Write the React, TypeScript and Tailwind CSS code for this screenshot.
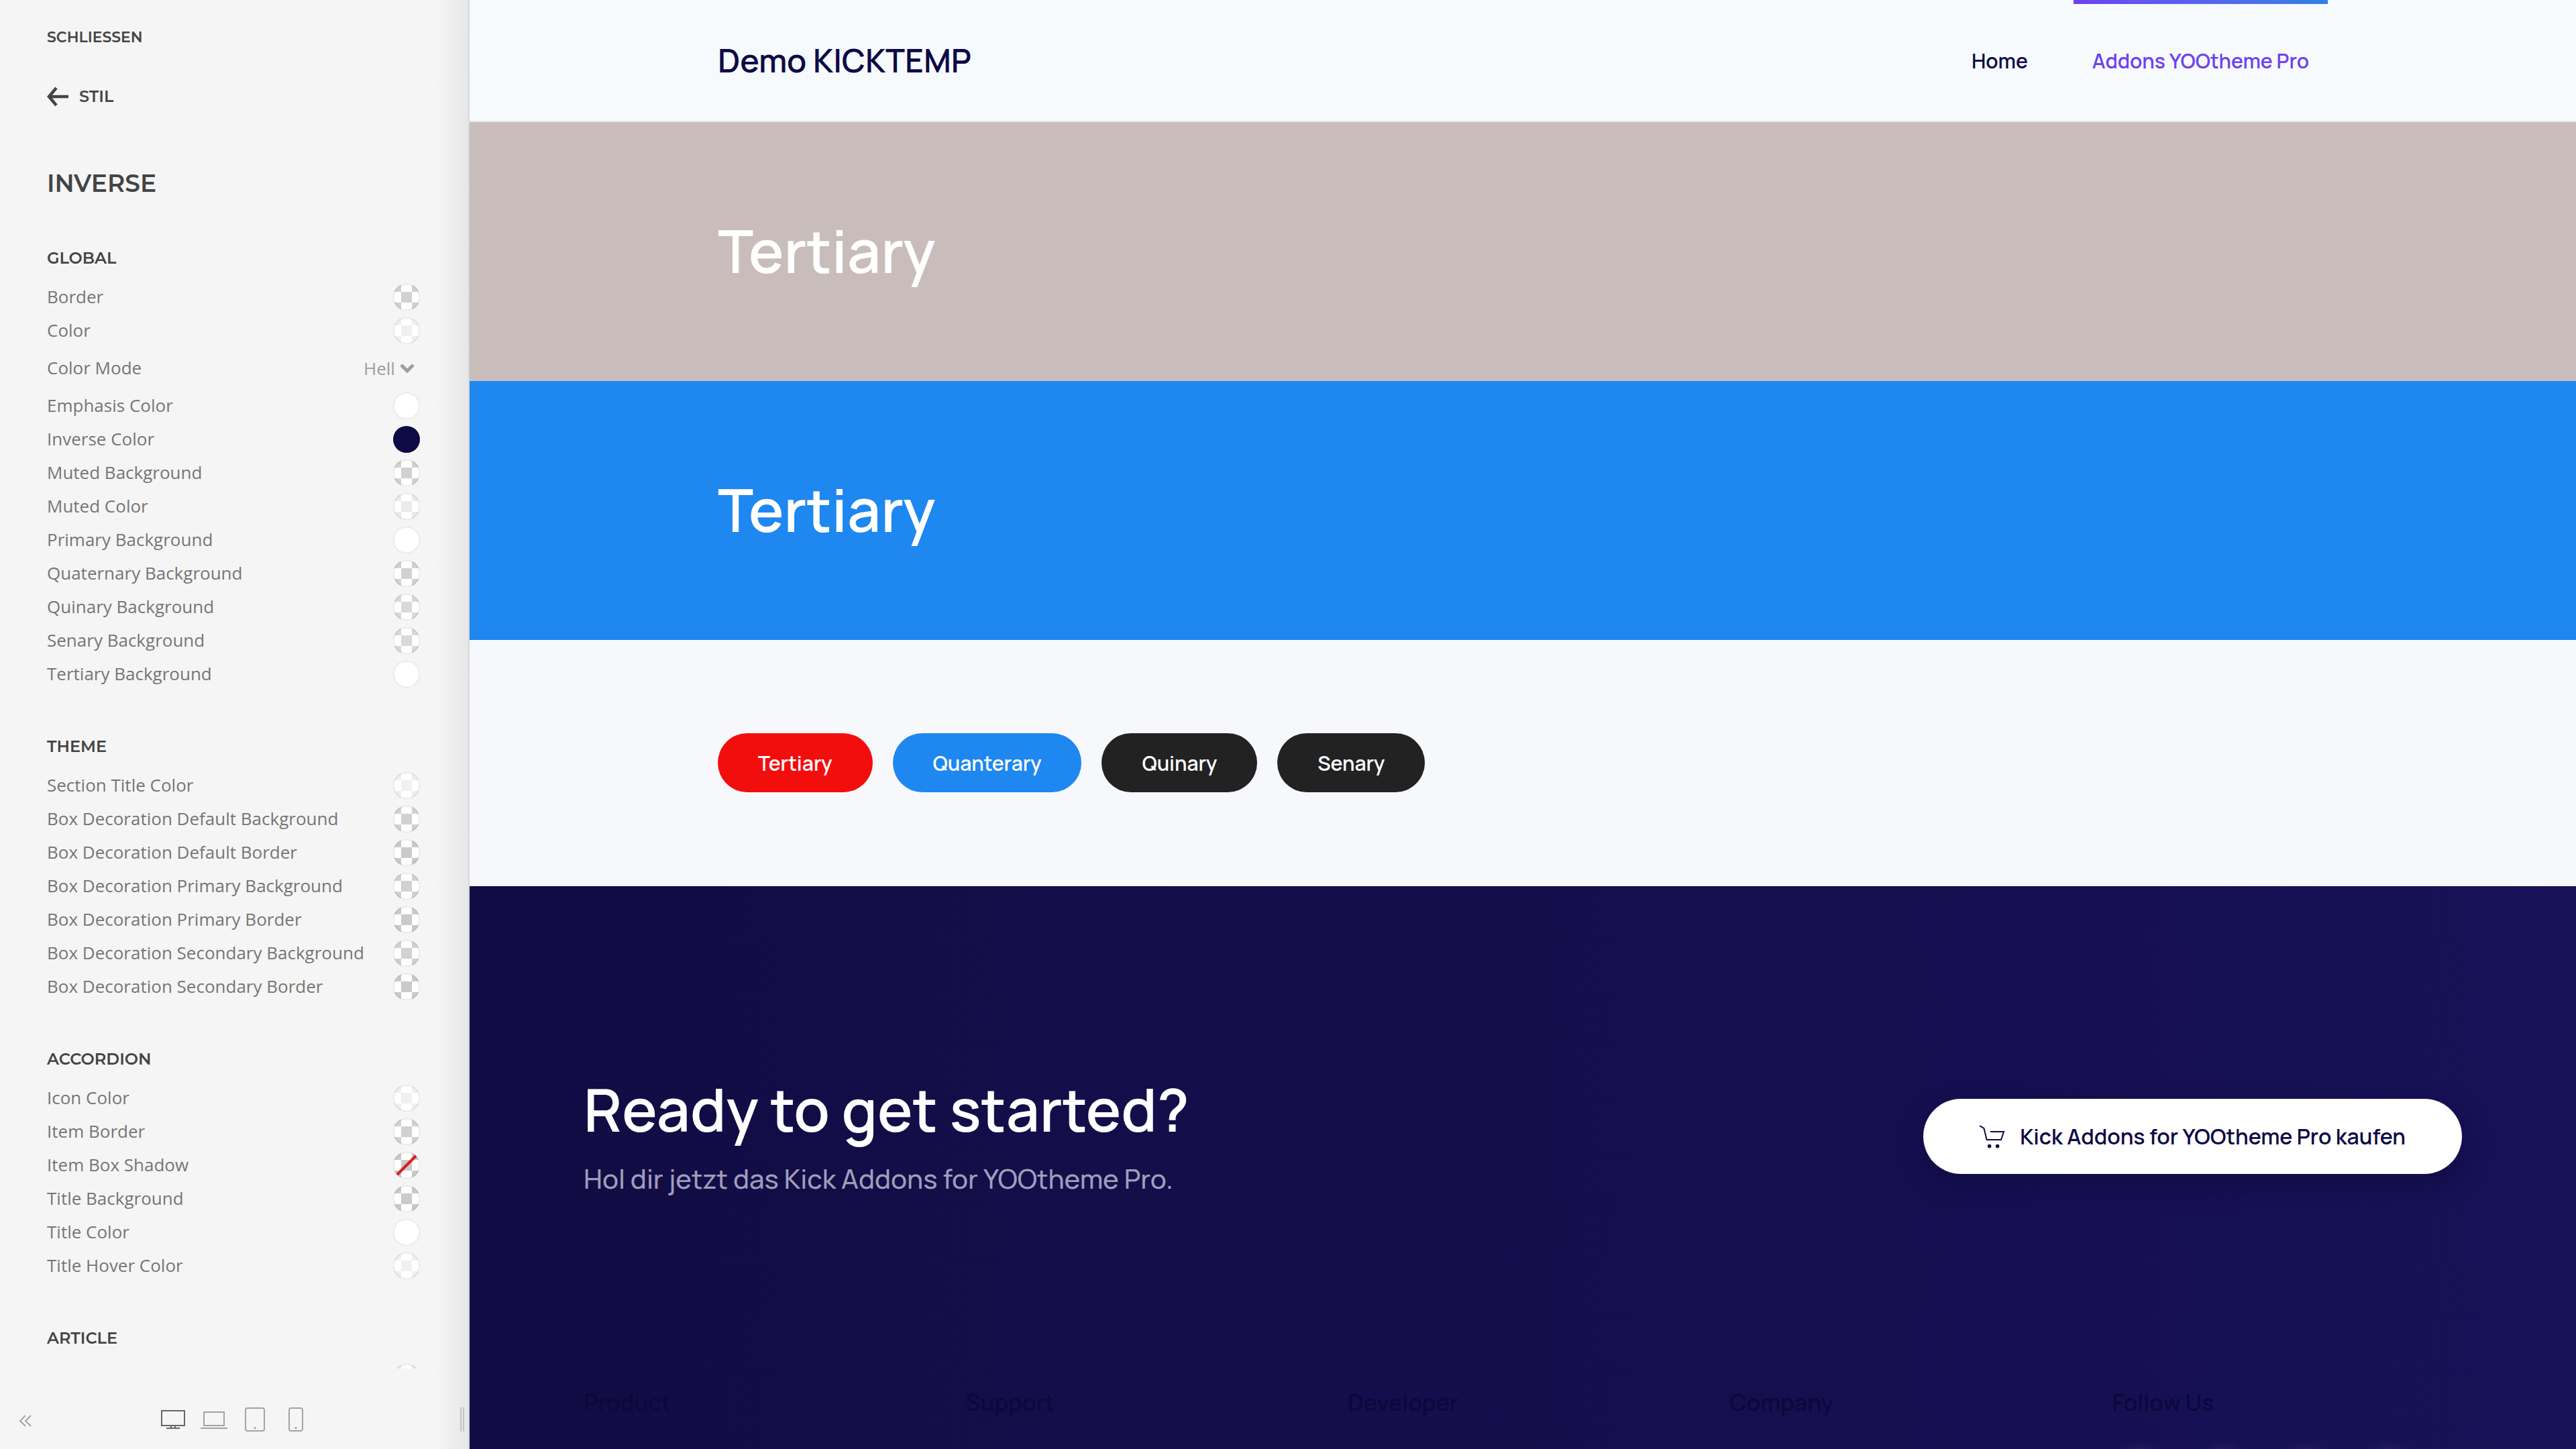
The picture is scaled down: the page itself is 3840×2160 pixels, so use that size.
import type { ReactNode } from "react";

type Tone = "white" | "navy" | "faint" | "light" | "soft" | "mid" | "dark" | "none";

type Option = { label: string; tone?: Tone; select?: boolean; swatchOnly?: boolean };
type Group = { title: string; options: Option[] };

const groups: Group[] = [
  {
    title: "GLOBAL",
    options: [
      { label: "Border", tone: "mid" },
      { label: "Color", tone: "faint" },
      { label: "Color Mode", select: true },
      { label: "Emphasis Color", tone: "white" },
      { label: "Inverse Color", tone: "navy" },
      { label: "Muted Background", tone: "mid" },
      { label: "Muted Color", tone: "light" },
      { label: "Primary Background", tone: "white" },
      { label: "Quaternary Background", tone: "mid" },
      { label: "Quinary Background", tone: "soft" },
      { label: "Senary Background", tone: "soft" },
      { label: "Tertiary Background", tone: "white" },
    ],
  },
  {
    title: "THEME",
    options: [
      { label: "Section Title Color", tone: "faint" },
      { label: "Box Decoration Default Background", tone: "mid" },
      { label: "Box Decoration Default Border", tone: "dark" },
      { label: "Box Decoration Primary Background", tone: "mid" },
      { label: "Box Decoration Primary Border", tone: "dark" },
      { label: "Box Decoration Secondary Background", tone: "mid" },
      { label: "Box Decoration Secondary Border", tone: "dark" },
    ],
  },
  {
    title: "ACCORDION",
    options: [
      { label: "Icon Color", tone: "faint" },
      { label: "Item Border", tone: "mid" },
      { label: "Item Box Shadow", tone: "none" },
      { label: "Title Background", tone: "dark" },
      { label: "Title Color", tone: "white" },
      { label: "Title Hover Color", tone: "faint" },
    ],
  },
  { title: "ARTICLE", options: [{ label: "Meta Color", tone: "light", swatchOnly: true }] },
];

const checker: Record<Tone, string> = {
  white: "#ffffff",
  navy: "#0e0a45",
  faint: "#f0f0f0",
  light: "#ebebeb",
  soft: "#d9d9d9",
  mid: "#d1d1d1",
  dark: "#cacaca",
  none: "#cacaca",
};

function Swatch({ tone, label }: { tone: Tone; label: string }) {
  const solid = tone === "white" || tone === "navy";
  return (
    <button
      type="button"
      aria-label={label}
      className="relative size-10 shrink-0 rounded-full shadow-[inset_0_0_3px_rgba(0,0,0,0.25)]"
      style={
        solid
          ? { backgroundColor: checker[tone] }
          : {
              background: `repeating-conic-gradient(#ffffff 0 25%, ${checker[tone]} 0 50%) -4px -4px / 32px 32px`,
            }
      }
    >
      {tone === "none" && (
        <svg viewBox="0 0 40 40" className="absolute inset-0 size-10">
          <path d="M6 34 34 6" stroke="#dc1c1c" strokeWidth="4" />
        </svg>
      )}
    </button>
  );
}

function OptionRow({ option }: { option: Option }) {
  if (option.select) {
    return (
      <div className="flex h-[52px] items-center justify-between pr-2">
        <label htmlFor="color-mode" className="pb-0.5">
          {option.label}
        </label>
        <span className="flex items-center gap-2 text-[#9e9e9e]">
          <select id="color-mode" className="w-[46px] appearance-none bg-transparent" defaultValue="Hell">
            <option>Hell</option>
            <option>Dunkel</option>
          </select>
          <svg viewBox="0 0 22 14" className="h-3.5 w-[22px]" fill="none">
            <path d="m2 2 9 9 9-9" stroke="#9e9e9e" strokeWidth="5" />
          </svg>
        </span>
      </div>
    );
  }
  return (
    <div className={`flex h-10 items-center ${option.swatchOnly ? "justify-end" : "justify-between"}`}>
      {!option.swatchOnly && <span className="pb-0.5">{option.label}</span>}
      <Swatch tone={option.tone ?? "white"} label={option.label} />
    </div>
  );
}

function DeviceButton({ label, active, children }: { label: string; active?: boolean; children: ReactNode }) {
  return (
    <button type="button" aria-label={label} className={active ? "text-[#666666]" : "text-[#a3a3a3]"}>
      <svg viewBox="0 0 20 20" className="size-10" fill="none" stroke="currentColor">
        {children}
      </svg>
    </button>
  );
}

function Sidebar() {
  return (
    <aside className="relative flex h-full w-[700px] shrink-0 flex-col border-r-2 border-[#d6d8d9] bg-[#f5f5f5] font-['Open_Sans','Noto_Sans',sans-serif] text-[26px] leading-10 text-[#757575]">
      <div className="flex min-h-0 flex-1 flex-col overflow-hidden pt-9 pr-[72px] pl-[70px]">
        <div className="font-['Montserrat','Inter',sans-serif] font-semibold text-[#444444]">
          <button type="button" className="block text-[22px] leading-10">
            SCHLIESSEN
          </button>
          <button type="button" className="mt-12 flex items-center gap-4 text-[24px] leading-10">
            <svg viewBox="0 0 32 30" className="h-[30px] w-8" fill="none" stroke="currentColor" strokeWidth="4.5">
              <path d="M32 15H3M14 2 3 15l11 13" />
            </svg>
            STIL
          </button>
          <h1 className="mt-[87px] text-[36px] leading-[44px]">INVERSE</h1>
        </div>
        {groups.map((group, i) => (
          <section key={group.title} className={i === 0 ? "mt-[70px]" : "mt-[68px]"}>
            <h2 className="mb-[18px] font-['Montserrat','Inter',sans-serif] text-[24px] leading-10 font-semibold text-[#444444]">
              {group.title}
            </h2>
            <div className="flex flex-col gap-2.5">
              {group.options.map((option) => (
                <OptionRow key={option.label} option={option} />
              ))}
            </div>
          </section>
        ))}
      </div>
      <footer className="grid h-[120px] shrink-0 grid-cols-[1fr_auto_1fr] items-center pt-8">
        <button type="button" aria-label="Einklappen" className="ml-[18px] justify-self-start text-[#a3a3a3]">
          <svg viewBox="0 0 20 20" className="size-10" fill="none" stroke="currentColor">
            <path d="m10 15-4-4 4-4M14 15l-4-4 4-4" />
          </svg>
        </button>
        <div className="flex gap-[21px]">
          <DeviceButton label="Desktop" active>
            <path d="M1.5 3.5h17v11h-17zM8.5 15v2M11.5 15v2M5 16.5h10" />
          </DeviceButton>
          <DeviceButton label="Laptop">
            <path d="M2.5 4.5h15v10h-15zM0 16.5h20" />
          </DeviceButton>
          <DeviceButton label="Tablet">
            <rect x="3" y="1.5" width="14" height="17" rx="1.5" />
            <circle cx="10" cy="16.3" r="0.8" fill="currentColor" stroke="none" />
          </DeviceButton>
          <DeviceButton label="Smartphone">
            <rect x="5" y="1.5" width="10" height="17" rx="1.5" />
            <circle cx="10" cy="16.3" r="0.8" fill="currentColor" stroke="none" />
          </DeviceButton>
        </div>
        <div className="mr-1.5 h-9 w-1.5 justify-self-end border-x-2 border-[#cccccc]" />
      </footer>
      <div className="pointer-events-none absolute inset-y-0 right-0 w-12 bg-linear-to-l from-black/6 to-transparent" />
    </aside>
  );
}

const pills = [
  { label: "Tertiary", className: "bg-[#f30e0e]" },
  { label: "Quanterary", className: "bg-[#1e87f0]" },
  { label: "Quinary", className: "bg-[#222222]" },
  { label: "Senary", className: "bg-[#222222]" },
];

const columns = ["Product", "Support", "Developer", "Company", "Follow Us"];
const socials = ["Twitter", "Facebook", "Instagram", "YouTube"];

function Banner({ className }: { className: string }) {
  return (
    <section className={className}>
      <div className="mx-auto max-w-[2400px] pt-[138px] pb-[142px]">
        <h2 className="text-[88px] leading-[106px] text-white">Tertiary</h2>
      </div>
    </section>
  );
}

function Preview() {
  return (
    <main className="flex h-full min-w-0 flex-1 flex-col font-['Manrope','Inter',sans-serif] text-[30px] font-semibold text-[#0e0a45]">
      <header className="shrink-0 border-b-2 border-[#e5e9ee] bg-[#f6fafd]">
        <div className="mx-auto flex h-[180px] max-w-[2400px] items-center justify-between">
          <a href="#" className="text-[48px] leading-[60px]">
            Demo KICKTEMP
          </a>
          <nav className="flex h-full gap-10">
            <a href="#" className="flex items-center px-7">
              Home
            </a>
            <a href="#" className="relative flex items-center px-7 text-[#6e40f2]">
              <span className="absolute inset-x-0 top-0 h-1.5 bg-linear-to-r from-[#6e40f2] to-[#2f80e4]" />
              Addons YOOtheme Pro
            </a>
          </nav>
        </div>
      </header>
      <Banner className="bg-[#c9bdbc]" />
      <Banner className="bg-[#1e87f0]" />
      <section className="bg-[#f7f8fc]">
        <div className="mx-auto flex max-w-[2400px] gap-[30px] pt-[139px] pb-[140px]">
          {pills.map((pill) => (
            <button key={pill.label} type="button" className={`h-[88px] rounded-full px-[60px] text-white ${pill.className}`}>
              {pill.label}
            </button>
          ))}
        </div>
      </section>
      <footer className="min-h-0 flex-1 overflow-hidden bg-linear-to-r from-[#120c44] to-[#171157]">
        <div className="mx-auto flex max-w-[2800px] items-center justify-between pt-[280px]">
          <div>
            <h2 className="text-[88px] leading-[104px] text-white">Ready to get started?</h2>
            <p className="mt-[22px] text-[40px] leading-[60px] font-medium text-[#a09dba]">
              Hol dir jetzt das Kick Addons for YOOtheme Pro.
            </p>
          </div>
          <a
            href="#"
            className="flex h-28 items-center gap-5 rounded-full bg-white px-[84px] text-[32px] shadow-[0_14px_40px_rgba(10,8,40,0.4)]"
          >
            <svg viewBox="0 0 20 20" className="size-10" fill="none">
              <circle cx="7.3" cy="17.3" r="1.4" fill="#0e0a45" />
              <circle cx="13.3" cy="17.3" r="1.4" fill="#0e0a45" />
              <path d="M0 2 3.2 4l2.1 8.5H16l2-6H8" stroke="#0e0a45" />
            </svg>
            Kick Addons for YOOtheme Pro kaufen
          </a>
        </div>
        <div className="mx-auto grid max-w-[2800px] grid-cols-5 gap-x-12 pt-[283px]">
          {columns.map((title) => (
            <div key={title}>
              <h3 className="text-[34px] leading-10 text-[#0c083c]">{title}</h3>
              {title === "Follow Us" && (
                <div className="mt-[50px] flex gap-[45px]">
                  {socials.map((name) => (
                    <a
                      key={name}
                      href="#"
                      aria-label={name}
                      className="size-20 rounded-full shadow-[0_0_20px_rgba(255,255,255,0.1)]"
                    />
                  ))}
                </div>
              )}
            </div>
          ))}
        </div>
      </footer>
    </main>
  );
}

export default function App() {
  return (
    <div className="flex h-screen w-full overflow-hidden">
      <Sidebar />
      <Preview />
    </div>
  );
}
